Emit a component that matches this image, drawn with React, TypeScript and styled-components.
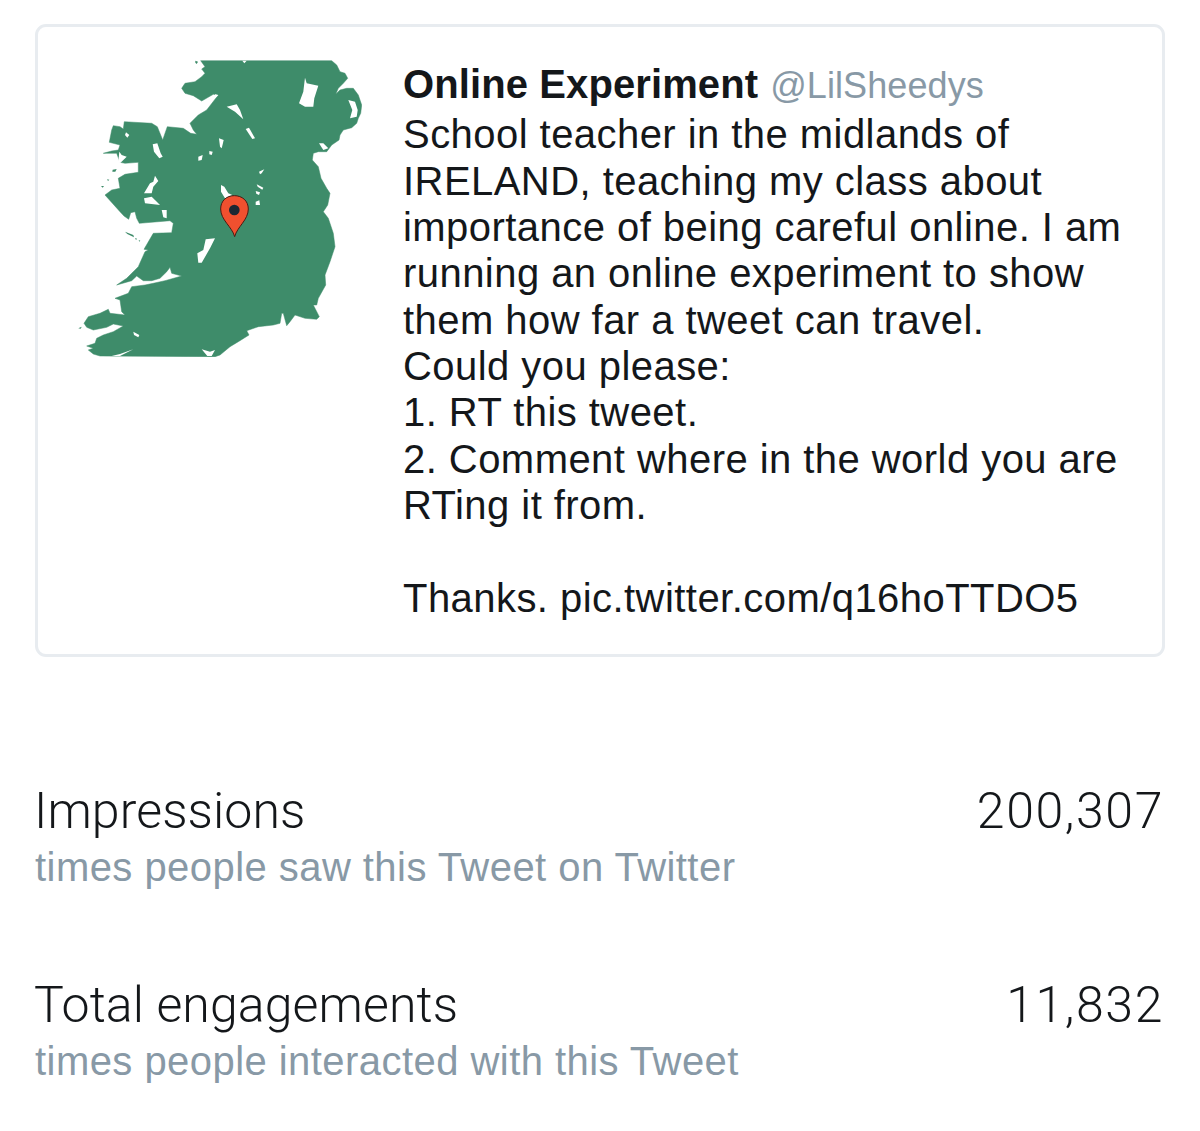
import React from "react";
import styled, { createGlobalStyle } from "styled-components";

const Global = createGlobalStyle`
  html, body { margin: 0; padding: 0; background: #fff; }
  body { font-family: "Liberation Sans", Arial, sans-serif; }
`;
const Page = styled.div`
  width: 1200px; height: 1131px; box-sizing: border-box; padding: 24px 35px 0; overflow: hidden;
`;
const Card = styled.section`
  box-sizing: border-box; width: 1130px; height: 633px; border: 3px solid #e8ecf0; border-radius: 11px;
  display: flex; padding: 13px 0 0 22px;
`;
const MapBox = styled.div`
  width: 320px; flex: none; margin-right: 23px;
  svg { display: block; filter: blur(0.35px); }
`;
const Body = styled.div`
  padding-top: 21px; font-size: 40px; line-height: 46.35px; color: #14171a; white-space: pre;
  letter-spacing: 0.45px;
`;
const NameRow = styled.div`display: flex; align-items: baseline; gap: 12px; margin-bottom: 2px;`;
const Name = styled.span`font-weight: 700; font-size: 40px; letter-spacing: 0.1px;`;
const Handle = styled.span`font-size: 36px; color: #8899a6; letter-spacing: 0.1px;`;
const Stats = styled.div`
  padding-top: 124px; display: flex; flex-direction: column; gap: 82px;
`;
const Stat = styled.div`display: flex; justify-content: space-between; align-items: flex-start;`;
const Title = styled.div`
  font-family: Roboto, "Liberation Sans", sans-serif; font-weight: 300; font-size: 50px; line-height: 60px; color: #14171a; letter-spacing: 0.1px; margin-left: -1px;
`;
const Sub = styled.div`
  font-size: 40px; line-height: 52px; color: #8899a6; letter-spacing: 0.45px;
`;
const Value = styled.div`
  font-family: Roboto, "Liberation Sans", sans-serif; font-weight: 300; font-size: 50px; line-height: 60px; color: #14171a; letter-spacing: 1.6px; padding-right: 1px;
`;

type P = [number, number];
const seg = (ox: number, oy: number, pts: P[]): string[] => pts.map(([x, y]) => `${(ox + x / 3).toFixed(1)} ${(oy + y / 3).toFixed(1)}`);
const closed = (pts: string[]) => `M${pts.join("L")}Z`;

const land = closed([
  ...seg(215, 55, [[350, 17], [365, 30], [375, 50], [390, 55], [398, 70], [385, 85], [370, 100], [362, 118], [375, 105], [395, 100], [415, 100], [430, 120], [440, 150], [437, 175], [430, 190], [425, 205], [410, 218], [385, 225], [375, 240], [372, 255], [350, 270], [335, 290], [310, 290], [295, 295], [292, 315], [310, 335], [318, 370], [335, 400], [345, 415], [338, 450]]),
  ...seg(215, 210, [[325, 5], [340, 25], [355, 70], [360, 110], [345, 155], [330, 195], [332, 225], [310, 265], [305, 285], [295, 285], [313, 320], [305, 328], [270, 325], [240, 315], [225, 335], [215, 347], [205, 310], [200, 310], [195, 340], [175, 345], [130, 350], [95, 362], [102, 375], [70, 395], [45, 410], [15, 435], [0, 440]]),
  ...seg(70, 210, [[90, 438], [70, 432], [55, 420], [70, 415], [50, 408], [75, 400], [80, 385], [100, 375], [130, 365], [160, 348], [130, 342], [110, 352], [70, 360], [50, 352], [42, 340], [55, 320], [90, 310], [115, 298], [120, 310], [165, 315], [155, 305], [150, 270], [135, 265], [175, 250], [185, 230], [225, 225], [250, 220], [285, 212], [335, 198], [305, 190], [300, 172], [290, 185], [270, 205], [245, 212], [220, 212], [200, 198], [185, 212], [140, 225], [170, 205], [205, 170], [225, 125], [235, 120], [222, 118], [250, 70], [305, 68], [310, 40], [300, 32], [208, 40], [200, 25], [195, 5], [182, 8], [176, 28], [162, 18], [150, 5]]),
  ...seg(70, 55, [[105, 420], [125, 405], [150, 400], [145, 370], [165, 358], [205, 352], [205, 322], [165, 325], [150, 322], [140, 295], [100, 295], [125, 288], [145, 285], [150, 270], [118, 262], [125, 225], [130, 212], [150, 215], [160, 222], [163, 200], [245, 205], [262, 215], [278, 255], [292, 215], [340, 220], [362, 235], [380, 238], [370, 225], [360, 205], [385, 180], [410, 165], [445, 120], [430, 118], [395, 138], [370, 122], [345, 115], [335, 100], [345, 85], [375, 80], [395, 65], [405, 55], [395, 42], [405, 35], [392, 17]]),
]);

const lakes = [
  seg(70, 55, [[248, 268], [262, 265], [272, 295], [278, 305], [268, 310], [252, 290]]),
  seg(70, 55, [[385, 305], [398, 300], [395, 315], [385, 317]]),
  seg(70, 55, [[418, 288], [428, 290], [425, 300], [418, 298]]),
  seg(70, 55, [[255, 362], [265, 378], [250, 395], [245, 415], [222, 415], [240, 385], [250, 380]]),
  seg(70, 55, [[222, 430], [245, 425], [270, 450], [225, 445]]),
  seg(70, 55, [[168, 232], [178, 240], [172, 248], [165, 240]]),
  seg(70, 55, [[148, 290], [155, 300], [170, 305], [150, 325], [145, 320]]),
  seg(215, 55, [[82, 17], [95, 17], [88, 25]]),
  seg(215, 55, [[270, 68], [275, 85], [310, 92], [298, 130], [295, 155], [270, 155], [252, 145], [265, 110], [268, 85]]),
  seg(215, 55, [[400, 135], [420, 140], [428, 165], [425, 185], [405, 190], [412, 165]]),
  seg(215, 55, [[312, 265], [325, 265], [340, 280], [325, 285]]),
  seg(215, 55, [[35, 155], [65, 148], [75, 165], [85, 193], [60, 170]]),
  seg(215, 55, [[92, 222], [102, 218], [120, 250], [112, 252]]),
  seg(215, 55, [[12, 250], [26, 255], [20, 280], [15, 275]]),
  seg(215, 55, [[132, 350], [148, 343], [140, 355], [135, 358]]),
  seg(215, 55, [[125, 388], [145, 398], [142, 404], [128, 395]]),
  seg(215, 55, [[122, 408], [135, 412], [132, 420], [124, 416]]),
  seg(215, 55, [[122, 440], [133, 436], [135, 450], [122, 450]]),
  seg(215, 55, [[18, 390], [28, 395], [40, 415], [52, 420], [30, 430], [18, 410]]),
  seg(215, 55, [[0, 118], [10, 120], [0, 130]]),
  seg(70, 210, [[407, 88], [435, 85], [420, 115], [395, 158], [385, 158], [382, 130], [400, 120]]),
  seg(70, 210, [[190, 365], [208, 375], [205, 382], [192, 375]]),
  seg(70, 210, [[190, 418], [150, 432], [125, 438], [150, 438]]),
  seg(70, 210, [[395, 418], [420, 425], [435, 420], [425, 438], [412, 438]]),
  seg(70, 210, [[275, 0], [290, 0], [290, 25], [280, 22]]),
].map(closed);

const isles = [
  seg(70, 55, [[128, 344], [140, 342], [136, 350], [127, 350]]),
  seg(70, 55, [[111, 373], [118, 374], [114, 378]]),
  seg(70, 55, [[93, 393], [102, 393], [98, 398]]),
  seg(70, 55, [[376, 17], [384, 20], [380, 27], [376, 23]]),
  seg(70, 210, [[165, 65], [190, 75], [192, 82], [172, 72]]),
  seg(70, 210, [[195, 84], [201, 86], [198, 90]]),
  seg(70, 210, [[206, 90], [211, 92], [208, 95]]),
  seg(70, 210, [[25, 355], [35, 350], [32, 356]]),
].map(closed);

function IrelandMap() {
  return (
    <svg width="320" height="330" viewBox="60 40 320 330" role="img" aria-label="Map of Ireland">
      <path d={land} fill="#3e8c6a" stroke="#3e8c6a" strokeWidth="0.5" strokeLinejoin="round" />
      {isles.map((d) => <path key={d} d={d} fill="#3e8c6a" />)}
      {lakes.map((d) => <path key={d} d={d} fill="#fff" />)}
      <g transform="translate(60 40) scale(0.3333)">
        <path d="M524 590C516 560 482 540 482 507C482 482 500 467 523 467C546 467 565 482 565 507C565 540 532 560 524 590Z" fill="#f0502f" stroke="#4a1a12" strokeWidth="3" />
        <circle cx="523" cy="510" r="16" fill="#1b2733" />
      </g>
    </svg>
  );
}

export default function App() {
  return (
    <Page>
      <Global />
      <Card>
        <MapBox><IrelandMap /></MapBox>
        <Body>
          <NameRow><Name>Online Experiment</Name><Handle>@LilSheedys</Handle></NameRow>
          {`School teacher in the midlands of
IRELAND, teaching my class about
importance of being careful online. I am
running an online experiment to show
them how far a tweet can travel.
Could you please:
1. RT this tweet.
2. Comment where in the world you are
RTing it from.

Thanks. pic.twitter.com/q16hoTTDO5`}
        </Body>
      </Card>
      <Stats>
        <Stat>
          <div><Title>Impressions</Title><Sub>times people saw this Tweet on Twitter</Sub></div>
          <Value>200,307</Value>
        </Stat>
        <Stat>
          <div><Title>Total engagements</Title><Sub>times people interacted with this Tweet</Sub></div>
          <Value>11,832</Value>
        </Stat>
      </Stats>
    </Page>
  );
}
